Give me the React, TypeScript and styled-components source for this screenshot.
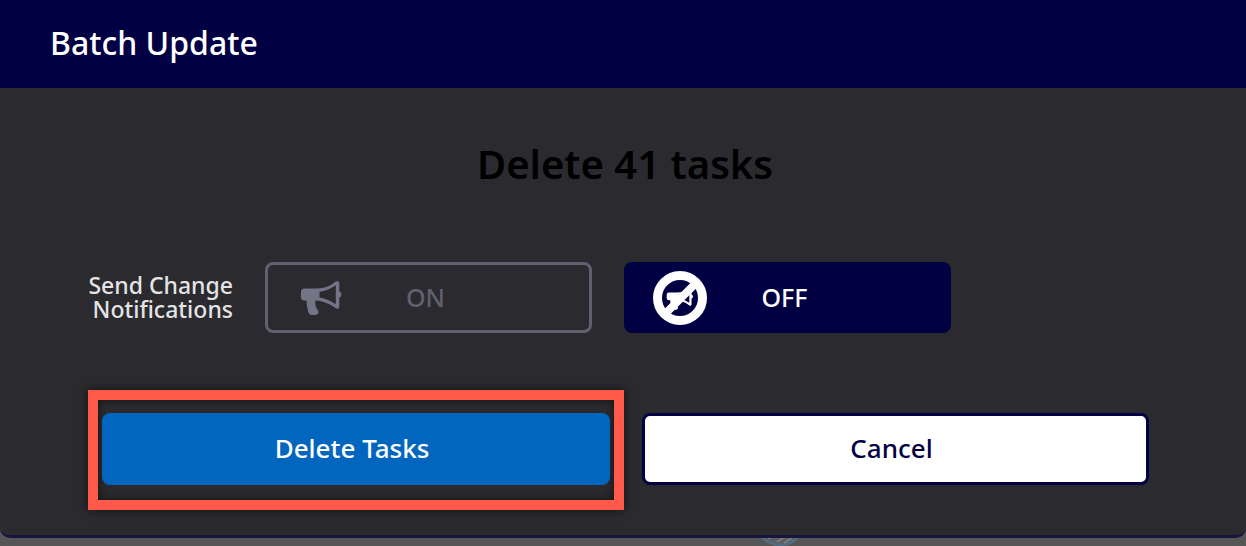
import React, { useState } from "react";
import styled, { createGlobalStyle } from "styled-components";

const navy = "#000042";
const slate = "#60606f";

const GlobalStyle = createGlobalStyle`
  * { box-sizing: border-box; }
  body {
    margin: 0;
    background: #555555;
    font-family: "Noto Sans", sans-serif;
  }
`;

const Dialog = styled.section`
  background: #2b2a2f;
  border-bottom: 3px solid #16163f;
  border-radius: 0 0 10px 10px;
  overflow: hidden;
`;

const Header = styled.header`
  display: flex;
  align-items: center;
  height: 88px;
  padding: 0 50px 2px;
  background: ${navy};
  color: #ffffff;
`;

const Title = styled.h1`
  margin: 0;
  font-size: 32px;
  font-weight: 500;
  line-height: 44px;
`;

const Body = styled.form`
  padding: 51px 0 25px;
`;

const Question = styled.h2`
  margin: 0 0 73px;
  padding-left: 4px;
  color: #000000;
  font-size: 40px;
  font-weight: 600;
  line-height: 50px;
  text-align: center;
`;

const Notifications = styled.div`
  display: grid;
  grid-template-columns: 145px 1fr 1fr 166px;
  column-gap: 32px;
  align-items: center;
  margin: 0 97px 57px 88px;
`;

const NotificationsLabel = styled.span`
  padding-bottom: 2px;
  color: #e4e4e4;
  font-size: 23px;
  font-weight: 500;
  line-height: 24px;
  text-align: right;
`;

const Toggle = styled.label<{ $selected: boolean }>`
  display: grid;
  grid-template-columns: 54px 1fr 54px;
  align-items: center;
  justify-items: center;
  height: 71px;
  padding: 0 32px 0 26px;
  border: 3px solid ${(p) => (p.$selected ? navy : slate)};
  border-radius: 8px;
  background: ${(p) => (p.$selected ? navy : "transparent")};
  color: ${(p) => (p.$selected ? "#ffffff" : slate)};
  font-size: 25px;
  font-weight: 500;
  line-height: 32px;
  cursor: pointer;
`;

const ToggleText = styled.span`
  padding-bottom: 2px;
`;

const HiddenRadio = styled.input`
  position: absolute;
  opacity: 0;
  pointer-events: none;
`;

const HornIcon = styled.svg`
  width: 42px;
  height: 36px;
  color: #747487;
`;

const MutedIcon = styled.svg`
  width: 54px;
  height: 54px;
`;

const Actions = styled.div`
  display: grid;
  grid-template-columns: 536fr 507fr;
  gap: 18px;
  align-items: baseline;
  margin: 0 97px 0 88px;
`;

const Highlight = styled.div`
  padding: 13px 4px 15px;
  border: 10px solid #ff594a;
  box-shadow: 0 0 10px rgba(0, 0, 0, 0.6), inset 0 0 10px rgba(0, 0, 0, 0.6);
`;

const ActionButton = styled.button<{ $primary?: boolean }>`
  display: block;
  width: 100%;
  height: 72px;
  padding: 0 8px 3px 0;
  border: 3px solid ${(p) => (p.$primary ? "#0265be" : navy)};
  border-radius: 8px;
  background: ${(p) => (p.$primary ? "#0265be" : "#ffffff")};
  color: ${(p) => (p.$primary ? "#ffffff" : navy)};
  font-family: inherit;
  font-size: 26px;
  font-weight: 500;
  line-height: 36px;
  cursor: pointer;
`;

const Behind = styled.div`
  display: flex;
  justify-content: center;
  height: 8px;
  padding-left: 314px;
  overflow: hidden;
`;

const BehindBadge = styled.svg`
  width: 52px;
  height: 8px;
`;

const hornPath =
  "M4.5 8.5 H17 C25 8.5 31 5.5 35.5 1.5 Q38.5 0 39.3 2.5 V11.5 Q41.5 12.2 41.5 14.5 Q41.5 16.8 39.3 17.5 V27 Q38.5 30 35.5 28 C30 24 23 21 15.5 20.5 C14.8 25 16 28 18 30.5 Q19.5 33 17 34.5 Q14 35.5 10.5 34.8 Q9 34.3 8.2 32 Q6.5 26 6.6 20.5 H4.5 Q1 20.5 1 17 V12 Q1 8.5 4.5 8.5 Z M19.5 11.8 V17.4 Q28.5 19 35.8 24.3 V5.2 Q28.5 10.5 19.5 11.8 Z";

function HornOn() {
  return (
    <HornIcon viewBox="0 0 42 36" aria-hidden="true">
      <path d={hornPath} fill="currentColor" fillRule="evenodd" />
    </HornIcon>
  );
}

function HornOff() {
  return (
    <MutedIcon viewBox="0 0 54 54" aria-hidden="true">
      <circle cx="27" cy="27" r="23" fill={navy} />
      <path d={hornPath} transform="translate(13 16) scale(0.65)" fill="#ffffff" fillRule="evenodd" />
      <path d="M11 44 L43 12" stroke="#ffffff" strokeWidth="8" />
      <circle cx="27" cy="27" r="22.5" fill="none" stroke="#ffffff" strokeWidth="9" />
    </MutedIcon>
  );
}

export default function App() {
  const [notify, setNotify] = useState(false);
  return (
    <>
      <GlobalStyle />
      <Dialog role="dialog" aria-labelledby="dialog-title">
        <Header>
          <Title id="dialog-title">Batch Update</Title>
        </Header>
        <Body onSubmit={(e) => e.preventDefault()}>
          <Question>Delete 41 tasks</Question>
          <Notifications role="radiogroup" aria-labelledby="notify-label">
            <NotificationsLabel id="notify-label">Send Change Notifications</NotificationsLabel>
            <Toggle $selected={notify}>
              <HiddenRadio type="radio" name="notify" checked={notify} onChange={() => setNotify(true)} />
              <HornOn />
              <ToggleText>ON</ToggleText>
            </Toggle>
            <Toggle $selected={!notify}>
              <HiddenRadio type="radio" name="notify" checked={!notify} onChange={() => setNotify(false)} />
              <HornOff />
              <ToggleText>OFF</ToggleText>
            </Toggle>
          </Notifications>
          <Actions>
            <Highlight>
              <ActionButton type="submit" $primary>
                Delete Tasks
              </ActionButton>
            </Highlight>
            <ActionButton type="button">Cancel</ActionButton>
          </Actions>
        </Body>
      </Dialog>
      <Behind aria-hidden="true">
        <BehindBadge viewBox="0 0 52 8">
          <circle cx="26" cy="-18" r="25" fill="#5c5f62" stroke="#4f6f88" strokeWidth="2" />
          <path d="M14 1 L19 -2 M23 4 L32 -2 M30 5 L38 0" stroke="#7b7d80" strokeWidth="2" />
        </BehindBadge>
      </Behind>
    </>
  );
}
